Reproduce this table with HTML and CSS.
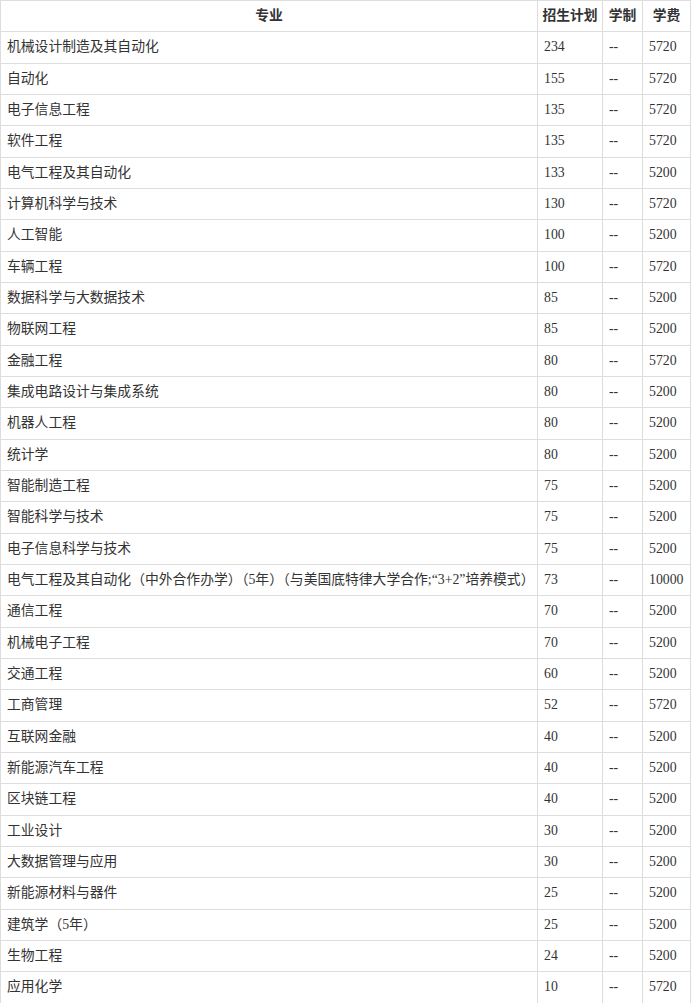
FILE: index.html
```html
<!DOCTYPE html>
<html lang="zh">
<head>
<meta charset="utf-8">
<link rel="stylesheet" href="styles.css">
</head>
<body>
<table class="plan">
<colgroup><col class="c-name"><col class="c-num"><col class="c-len"><col class="c-fee"></colgroup>
<thead>
<tr><th>专业</th><th>招生计划</th><th>学制</th><th>学费</th></tr>
</thead>
<tbody>
<tr><td>机械设计制造及其自动化</td><td>234</td><td>--</td><td>5720</td></tr>
<tr><td>自动化</td><td>155</td><td>--</td><td>5720</td></tr>
<tr><td>电子信息工程</td><td>135</td><td>--</td><td>5720</td></tr>
<tr><td>软件工程</td><td>135</td><td>--</td><td>5720</td></tr>
<tr><td>电气工程及其自动化</td><td>133</td><td>--</td><td>5200</td></tr>
<tr><td>计算机科学与技术</td><td>130</td><td>--</td><td>5720</td></tr>
<tr><td>人工智能</td><td>100</td><td>--</td><td>5200</td></tr>
<tr><td>车辆工程</td><td>100</td><td>--</td><td>5720</td></tr>
<tr><td>数据科学与大数据技术</td><td>85</td><td>--</td><td>5200</td></tr>
<tr><td>物联网工程</td><td>85</td><td>--</td><td>5200</td></tr>
<tr><td>金融工程</td><td>80</td><td>--</td><td>5720</td></tr>
<tr><td>集成电路设计与集成系统</td><td>80</td><td>--</td><td>5200</td></tr>
<tr><td>机器人工程</td><td>80</td><td>--</td><td>5200</td></tr>
<tr><td>统计学</td><td>80</td><td>--</td><td>5200</td></tr>
<tr><td>智能制造工程</td><td>75</td><td>--</td><td>5200</td></tr>
<tr><td>智能科学与技术</td><td>75</td><td>--</td><td>5200</td></tr>
<tr><td>电子信息科学与技术</td><td>75</td><td>--</td><td>5200</td></tr>
<tr><td>电气工程及其自动化（中外合作办学）（5年）（与美国底特律大学合作;“3+2”培养模式）</td><td>73</td><td>--</td><td>10000</td></tr>
<tr><td>通信工程</td><td>70</td><td>--</td><td>5200</td></tr>
<tr><td>机械电子工程</td><td>70</td><td>--</td><td>5200</td></tr>
<tr><td>交通工程</td><td>60</td><td>--</td><td>5200</td></tr>
<tr><td>工商管理</td><td>52</td><td>--</td><td>5720</td></tr>
<tr><td>互联网金融</td><td>40</td><td>--</td><td>5200</td></tr>
<tr><td>新能源汽车工程</td><td>40</td><td>--</td><td>5200</td></tr>
<tr><td>区块链工程</td><td>40</td><td>--</td><td>5200</td></tr>
<tr><td>工业设计</td><td>30</td><td>--</td><td>5200</td></tr>
<tr><td>大数据管理与应用</td><td>30</td><td>--</td><td>5200</td></tr>
<tr><td>新能源材料与器件</td><td>25</td><td>--</td><td>5200</td></tr>
<tr><td>建筑学（5年）</td><td>25</td><td>--</td><td>5200</td></tr>
<tr><td>生物工程</td><td>24</td><td>--</td><td>5200</td></tr>
<tr><td>应用化学</td><td>10</td><td>--</td><td>5720</td></tr>
</tbody>
</table>
</body>
</html>
```

FILE: styles.css
```css
html, body {
  margin: 0;
  padding: 0;
  background: #ffffff;
}
.plan {
  border-collapse: collapse;
  table-layout: fixed;
  width: 690px;
  font-family: "Liberation Serif", "Noto Sans CJK SC", serif;
  font-size: 13.8px;
  color: #333333;
}
.c-name { width: 537px; }
.c-num { width: 65px; }
.c-len { width: 40px; }
.c-fee { width: 48px; }
.plan th, .plan td {
  border: 1px solid #dddddd;
  height: 31.34px;
  padding: 0 6px;
  box-sizing: border-box;
  text-align: left;
  vertical-align: middle;
  white-space: nowrap;
  line-height: 20px;
}
.plan th {
  font-weight: bold;
  text-align: center;
  padding: 0 2px;
  color: #333333;
}
```
